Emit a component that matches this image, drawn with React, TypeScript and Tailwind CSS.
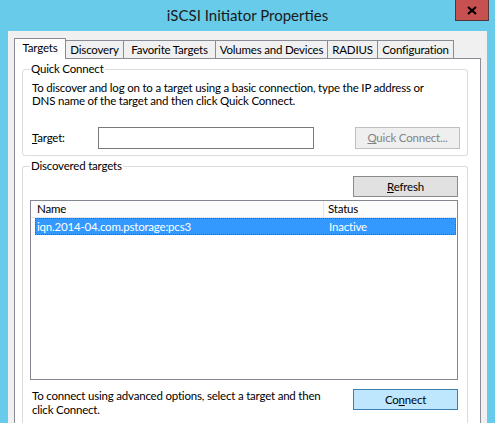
import React from "react";

const font = { fontFamily: '"Segoe UI", Lato, "Liberation Sans", sans-serif' };

const tabs = [
  { label: "Targets", w: "w-[52px]" },
  { label: "Discovery", w: "w-[58px]" },
  { label: "Favorite Targets", w: "w-[92px]" },
  { label: "Volumes and Devices", w: "w-[112px]" },
  { label: "RADIUS", w: "w-[50px]" },
  { label: "Configuration", w: "w-[76px]" },
];

function GroupBox({ title, className, children }: { title: React.ReactNode; className?: string; children: React.ReactNode }) {
  return (
    <div className={"relative border border-[#dcdcdc] rounded-[3px] " + (className ?? "")}>
      {/* подпись поверх рамки */}
      <span className="absolute left-[7px] -top-[8px] bg-white px-[1px] leading-[14px]">{title}</span>
      {children}
    </div>
  );
}

export default function App() {
  return (
    <div
      style={font}
      className="w-[495px] h-[423px] bg-[#67cbe9] flex flex-col overflow-hidden text-[11.5px] tracking-[-0.2px] text-black whitespace-nowrap"
    >
      {/* Заголовок окна */}
      <div className="relative h-[31px] shrink-0 flex items-center justify-center">
        <span className="text-[15px] tracking-normal text-[#1a1a1a] -mt-[1px]">iSCSI Initiator Properties</span>
        <button className="absolute right-[6px] top-0 w-[34px] h-[21px] bg-[#c75050] border border-t-0 border-[#4a3a3a] flex items-center justify-center">
          <svg width="10" height="9" viewBox="0 0 10 9">
            <path d="M1 1 L9 8 M9 1 L1 8" stroke="#000" strokeWidth="2.2" />
          </svg>
        </button>
      </div>

      {/* Тело окна */}
      <div className="flex-1 min-h-0 mx-[8px] bg-[#f0f0f0] pl-[6px] pr-[6px] pt-[7px] flex flex-col">
        {/* Вкладки */}
        <div className="flex items-end h-[20px] shrink-0 relative z-10">
          {tabs.map((t, i) => (
            <div
              key={t.label}
              className={
                t.w +
                " flex items-center justify-center border-[#898c95] " +
                (i === 0
                  ? "h-[21px] -mb-[1px] bg-white border border-b-0 pb-[2px]"
                  : "h-[18px] bg-[#f0f0f0] border-t border-r ")
              }
            >
              {t.label}
            </div>
          ))}
        </div>

        {/* Панель вкладки */}
        <div className="flex-1 min-h-0 bg-white border border-[#898c95] border-b-0 pl-[7px] pr-[12px] pt-[10px] flex flex-col">
          <GroupBox title="Quick Connect" className="h-[87px] shrink-0 pl-[9px] pr-[7px] pt-[11px]">
            <p className="leading-[13px]">
              To discover and log on to a target using a basic connection, type the IP address or
              <br />
              DNS name of the target and then click Quick Connect.
            </p>
            <div className="flex items-center mt-[20px]">
              <span className="w-[66px]">
                <u>T</u>arget:
              </span>
              <div className="w-[216px] h-[22px] border border-[#7a7a7a] bg-white" />
              <button className="ml-auto w-[105px] h-[22px] border border-[#bfbfbf] bg-[#efefef] text-[#838383]">
                <u>Q</u>uick Connect...
              </button>
            </div>
          </GroupBox>

          <GroupBox
            title={
              <>
                Discovered tar<u>g</u>ets
              </>
            }
            className="flex-1 mt-[10px] border-b-0 rounded-b-none pl-[7px] pr-[9px] pt-[9px] flex flex-col"
          >
            <div className="flex justify-end">
              <button className="w-[105px] h-[21px] border border-[#8a8a8a] bg-[#e1e1e1]">
                <u>R</u>efresh
              </button>
            </div>

            {/* Список целей */}
            <div className="mt-[3px] h-[180px] shrink-0 border border-[#828790] bg-white">
              <div className="flex h-[17px] items-center border-b border-[#e5e5e5] bg-[#fcfcfc]">
                <span className="w-[293px] pl-[6px] border-r border-[#e5e5e5] h-full flex items-center">Name</span>
                <span className="pl-[4px]">Status</span>
              </div>
              <div className="ml-[4px] mr-[1px] h-[17px] bg-[#3399ff] text-white flex items-center border border-dotted border-[#1e6fc0]">
                <span className="w-[289px] pl-[1px]">iqn.2014-04.com.pstorage:pcs3</span>
                <span className="pl-[4px]">Inactive</span>
              </div>
            </div>

            <div className="flex items-start mt-[9px]">
              <p className="leading-[14px] pl-[2px]">
                To connect using advanced options, select a target and then
                <br />
                click Connect.
              </p>
              <button className="ml-auto w-[105px] h-[21px] border border-[#3c7fb1] bg-[#bee6fd]">
                Co<u>n</u>nect
              </button>
            </div>
          </GroupBox>
        </div>
      </div>
    </div>
  );
}
